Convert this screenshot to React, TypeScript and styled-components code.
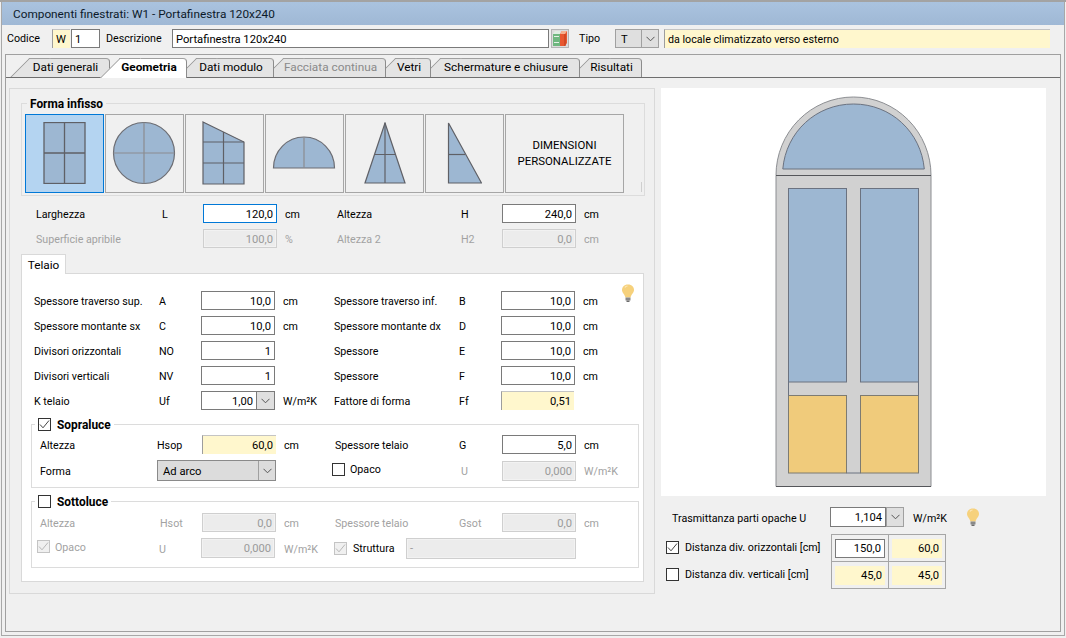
import React from "react";
import styled, { createGlobalStyle } from "styled-components";

const Global = createGlobalStyle`
  html, body { margin: 0; padding: 0; background: #f0f0f0; }
  body { font-family: Roboto, "Open Sans", sans-serif; font-size: 10.7px; color: #000; }
  * { box-sizing: border-box; }
`;

const Page = styled.div`
  width: 1066px; height: 638px; overflow: hidden; background: #f0f0f0;
  border-top: 2px solid #a3a3a3; padding-left: 1px;
`;
const Win = styled.div`
  width: 1064px; height: 634px;
  border-left: 1px solid #a8a8a8; border-right: 1px solid #a8a8a8; border-bottom: 1px solid #a8a8a8;
`;
const TitleBar = styled.div`
  height: 23px; padding-left: 11px; display: flex; align-items: center;
  background: linear-gradient(#aac3df, #9fb8d5); color: #0c1a2a; font-size: 11.8px;
`;
const Toolbar = styled.div`
  height: 29px; display: flex; align-items: center; padding: 0 0 2px 5px;
`;
const BarLabel = styled.span<{ $w: number; $pad?: number }>`
  width: ${p => p.$w}px; padding-left: ${p => p.$pad ?? 0}px; flex: none; white-space: nowrap;
`;
const Box = styled.div<{ $w: number; $h?: number; $kind?: "plain" | "focus" | "off" | "calc" | "bare" | "cell"; $left?: boolean; $ml?: number }>`
  width: ${p => p.$w}px; height: ${p => p.$h ?? 19}px; flex: none; margin-left: ${p => p.$ml ?? 0}px;
  display: flex; align-items: center; justify-content: ${p => (p.$left ? "flex-start" : "flex-end")};
  padding: 1px 3px 0; white-space: nowrap; font-size: 11.2px;
  ${p => {
    switch (p.$kind) {
      case "focus": return "background:#fff;border:1px solid #0078d7;";
      case "off": return "background:#ececec;border:1px solid #cfcfcf;color:#9a9a9a;box-shadow:inset 0 0 0 1px #f2f2f2;";
      case "calc": return "background:#fff7cd;border-top:1px solid #c4c4c4;border-left:1px solid #9d9d9d;";
      case "cell": return "background:#fff7cd;";
      case "bare": return "background:#fff;border-right:1px solid #7a7a7a;";
      default: return "background:#fff;border:1px solid #7a7a7a;";
    }
  }}
`;
const BookBtn = styled.div`
  width: 18px; height: 19px; margin-left: 2px; flex: none; background: #dcdcdc; border: 1px solid #b4b4b4;
  display: flex; align-items: center; justify-content: center;
`;
const ComboWrap = styled.div<{ $w: number; $h?: number; $off?: number; $tone?: "field" | "select" | "btn" }>`
  width: ${p => p.$w}px; height: ${p => p.$h ?? 19}px; flex: none; display: flex; align-items: center;
  padding-left: ${p => p.$off ?? 5}px;
  ${p => p.$tone === "field" && "background:#fff;border:1px solid #7a7a7a;"}
  ${p => p.$tone === "select" && "background:#dcdcdc;border:1px solid #8a8a8a;grid-column:span 2;"}
  ${p => p.$tone === "btn" && "background:#dfdfdf;border:1px solid #a0a0a0;justify-content:center;"}
  ${p => !p.$tone && "background:#dfdfdf;border:1px solid #a0a0a0;"}
`;
const ComboText = styled.span`
  flex: 1; white-space: nowrap; font-size: 11.2px; padding-top: 1px;
`;
const ComboArrow = styled.div<{ $w?: number; $fill?: boolean }>`
  width: ${p => p.$w ?? 17}px; align-self: stretch; flex: none;
  ${p => p.$fill ? "background:#dfdfdf;" : "border-left:1px solid #a0a0a0;"}
  display: flex; align-items: center; justify-content: center;
`;
const Note = styled.div`
  width: 386px; height: 19px; margin-left: 5px; padding-left: 3px; display: flex; align-items: center;
  background: #fff7cd; border-top: 1px solid #c4c4c4; border-left: 1px solid #9d9d9d; flex: none;
`;
const TabPanel = styled.div`
  width: 1056px; height: 578px; margin-left: 3px; border: 1px solid #a0a0a0; padding-top: 3px;
`;
const TabStrip = styled.div`
  height: 20px; display: flex; gap: 9px; padding-left: 23px; border-bottom: 1px solid #6e6e6e;
`;
const Tab = styled.div<{ $w: number; $on?: boolean; $off?: boolean; $z: number }>`
  position: relative; z-index: ${p => p.$z}; width: ${p => p.$w}px; height: ${p => (p.$on ? 20 : 19)}px;
  background: ${p => (p.$on ? "#fff" : "#e4e4e4")};
  border-top: 1px solid #a0a0a0; border-right: 1px solid #8c8c8c; border-top-right-radius: 4px;
  display: flex; align-items: center; justify-content: center; padding: 0 7px ${p => (p.$on ? 3 : 2)}px 0;
  font-size: 11.8px; white-space: nowrap;
  font-weight: ${p => (p.$on ? 700 : 400)};
  color: ${p => (p.$off ? "#8a8a8a" : "#000")};
  &::before {
    content: ""; position: absolute; left: -9px; top: -1px; bottom: 0; width: 20px;
    background: inherit; border-top: 1px solid #a0a0a0; border-left: 1px solid #8c8c8c;
    transform: skewX(-45deg); z-index: -1;
  }
`;
const TabBody = styled.div`
  display: flex; padding: 10px 0 0 3px;
`;
const LeftBox = styled.div`
  width: 646px; height: 506px; border: 1px solid #d9d9d9; padding: 6px 0 0 11px; flex: none;
`;
const Group = styled.fieldset<{ $w: number; $h: number; $pt?: number; $mt?: number }>`
  width: ${p => p.$w}px; height: ${p => p.$h}px; margin: ${p => p.$mt ?? 0}px 0 0 0;
  padding: ${p => p.$pt ?? 3}px 0 0 3px; border: 1px solid #dcdcdc; min-width: 0; position: relative;
`;
const GroupLegend = styled.legend<{ $ml?: number }>`
  display: flex; align-items: center; gap: 6px; height: 16px; padding: 1px 3px 0; margin-left: ${p => p.$ml ?? 2}px;
  font-weight: 700; font-size: 11.9px; color: #000;
`;
const ShapeRow = styled.div`
  display: flex; gap: 1px;
  &::after {
    content: ""; position: absolute; right: 2px; bottom: 3px; width: 1px; height: 10px; background: #cfcfcf;
  }
`;
const ShapeBtn = styled.div<{ $on?: boolean; $wide?: boolean }>`
  width: ${p => (p.$wide ? 119 : 79)}px; height: 79px; flex: none;
  border: 1px solid ${p => (p.$on ? "#0078d7" : "#a6a6a6")};
  background: ${p => (p.$on ? "#b4d4f1" : "#f0f0f0")};
  padding: ${p => (p.$wide ? "0" : "0 2px 2px 0")};
  display: flex; align-items: center; justify-content: center; text-align: center; line-height: 15.5px; font-size: 11.4px;
`;
const DimGrid = styled.div`
  display: grid; grid-template-columns: 126px 41px 74px 60px 124px 41px 74px 40px;
  grid-auto-rows: 19px; row-gap: 6px; align-items: center; margin: 8px 0 5px 15px;
`;
const Row = styled.div`
  display: grid; grid-template-columns: 125px 42px 74px 59px 125px 42px 74px 50px;
  grid-auto-rows: 19px; row-gap: 6px; align-items: center;
`;
const SubGrid = styled.div<{ $second: number }>`
  display: grid; grid-template-columns: 117px 45px 74px 59px 124px 43px 74px 60px;
  grid-template-rows: 19px ${p => p.$second}px; row-gap: 6px; align-items: center; padding-left: 5px;
`;
const Txt = styled.span<{ $off?: boolean; $pad?: number }>`
  white-space: nowrap; color: ${p => (p.$off ? "#a2a2a2" : "#000")};
  padding: 2px 0 0 ${p => p.$pad ?? 0}px;
`;
const Unit = styled(Txt)`
  padding-left: 8px;
`;
const FrameTab = styled.div`
  width: 45px; height: 20px; background: #fff; border: 1px solid #d9d9d9; border-bottom: none;
  display: flex; align-items: center; justify-content: center; font-size: 11.8px; position: relative; top: 1px; z-index: 1;
`;
const FramePanel = styled.div`
  position: relative; width: 623px; height: 309px; background: #fff; border: 1px solid #d9d9d9; padding: 17px 0 0 12px;
`;
const Bulb = styled.div`
  position: absolute; right: 8px; top: 10px; line-height: 0;
`;
const InnerGroups = styled.div`
  margin-left: -3px; padding-top: 6px;
`;
const Check = styled.span<{ $off?: boolean }>`
  width: 13px; height: 13px; flex: none; display: inline-flex; align-items: center; justify-content: center;
  background: ${p => (p.$off ? "#f0f0f0" : "#fff")};
  border: 1px solid ${p => (p.$off ? "#c4c4c4" : "#333")};
`;
const CheckLine = styled.label<{ $shift?: number; $gap?: number; $lift?: number }>`
  display: flex; align-items: center; gap: ${p => p.$gap ?? 5}px; margin-left: ${p => p.$shift ?? 0}px; white-space: nowrap;
  margin-top: ${p => -(p.$lift ?? 0)}px;
`;
const StructRow = styled.div`
  grid-column: 5 / span 3; display: flex; align-items: center; margin-left: -1px;
`;
const StructLabel = styled.span`
  width: 59px; padding-left: 6px; flex: none; white-space: nowrap;
`;
const RightCol = styled.div`
  width: 385px; margin-left: 6px; flex: none;
`;
const Picture = styled.div`
  height: 408px; background: #fff; line-height: 0;
`;
const URow = styled.div`
  display: flex; align-items: center; height: 20px; margin-top: 11px; padding-left: 11px;
`;
const ULabel = styled.span`
  width: 158px; flex: none; white-space: nowrap; padding-top: 2px;
`;
const UUnit = styled.span`
  width: 53px; margin-left: 9px; flex: none; white-space: nowrap; padding-top: 2px;
`;
const DistRow = styled.div`
  display: flex; margin-top: 7px; height: 55px;
`;
const DistChecks = styled.div`
  width: 170px; flex: none; padding: 7px 0 0 5px; display: flex; flex-direction: column; gap: 14px;
`;
const DistGrid = styled.div`
  width: 115px; height: 55px; display: grid; grid-template-columns: 1fr 1fr; grid-template-rows: 1fr 1fr;
  gap: 1px; padding: 1px; background: #a6a6a6;
`;
const DistCell = styled.div`
  background: #f0f0f0; display: flex; align-items: center; justify-content: center;
`;

const Chevron = () => (
  <svg width="9" height="6" viewBox="0 0 9 6"><path d="M0.5 0.8 L4.5 4.8 L8.5 0.8" fill="none" stroke="#555" strokeWidth="1" /></svg>
);
const Tick = ({ off }: { off?: boolean }) => (
  <svg width="11" height="11" viewBox="0 0 11 11"><path d="M1 5.5 L4 8.8 L10 1.5" fill="none" stroke={off ? "#b8b8b8" : "#444"} strokeWidth="1" /></svg>
);
const BulbIcon = () => (
  <svg width="14" height="19" viewBox="0 0 14 19">
    <path d="M7 0.5 C3 0.5 1 3 1 6 C1 8.8 3.6 10 4.4 13.5 L9.6 13.5 C10.4 10 13 8.8 13 6 C13 3 11 0.5 7 0.5Z" fill="#f6d17c" />
    <path d="M4 3.5 C4.5 2.5 5.5 2 6.5 2" stroke="#fbe8bd" strokeWidth="1.2" fill="none" />
    <rect x="4.5" y="13.5" width="5" height="3" fill="#8a8a8a" />
    <rect x="5.5" y="16.5" width="3" height="1.5" fill="#6c6c6c" />
  </svg>
);
const BookIcon = () => (
  <svg width="16" height="17" viewBox="0 0 16 17">
    <path d="M1 4 L3 1 L8 1 L8 4Z" fill="#dfeee2" />
    <rect x="1" y="4" width="7" height="12" fill="#6fb77f" />
    <rect x="2" y="6" width="5" height="1" fill="#e4f1e6" />
    <rect x="2" y="12" width="5" height="1" fill="#e4f1e6" />
    <path d="M8 4 L8 16 L13 16 L15 13 L15 1 L10 1Z" fill="#e8572f" />
    <path d="M8 4 L13 4 L15 1 L10 1Z" fill="#f6b08f" />
    <rect x="12.5" y="4" width="1" height="12" fill="#b93c1c" />
  </svg>
);

const G = "#9db7d2";
const ST = "#5f6066";
const Win1 = () => (
  <svg width="52" height="62" viewBox="0 0 52 62">
    <rect x="6" y="0.5" width="41" height="61" fill={G} stroke={ST} strokeWidth="1.3" />
    <path d="M26.5 0.5V61.5M6 31H47" stroke={ST} strokeWidth="1.3" />
  </svg>
);
const Win2 = () => (
  <svg width="64" height="64" viewBox="0 0 64 64">
    <circle cx="32" cy="32" r="30.5" fill={G} stroke="#6c6d73" strokeWidth="1.2" />
    <path d="M32 1.5V62.5M1.5 32H62.5" stroke="#8b8c90" strokeWidth="1.2" />
  </svg>
);
const Win3 = () => (
  <svg width="44" height="64" viewBox="0 0 44 64">
    <path d="M1 1 L42 21 V63 H1Z" fill={G} stroke={ST} strokeWidth="1.2" />
    <path d="M1 21H42M1 42H42M21.5 11V63" stroke={ST} strokeWidth="1.2" />
  </svg>
);
const Win4 = () => (
  <svg width="64" height="34" viewBox="0 0 64 34">
    <path d="M1.5 32 A30.5 31 0 0 1 62.5 32Z" fill={G} stroke="#6c6d73" strokeWidth="1.2" />
    <path d="M32 1V32" stroke="#8b8c90" strokeWidth="1.2" />
  </svg>
);
const Win5 = () => (
  <svg width="44" height="62" viewBox="-1 0 44 62">
    <path d="M22 1 L42 61 H2Z" fill={G} stroke={ST} strokeWidth="1.2" />
    <path d="M22 1V61M11 32.5H33" stroke={ST} strokeWidth="1.2" />
  </svg>
);
const Win6 = () => (
  <svg width="36" height="62" viewBox="-1 0 36 62">
    <path d="M1.5 1 L34.5 61 H1.5Z" fill={G} stroke={ST} strokeWidth="1.2" />
    <path d="M1.5 32.5H18" stroke={ST} strokeWidth="1.2" />
  </svg>
);

const FullWindow = () => (
  <svg width="385" height="408" viewBox="661 88 385 408">
    <path d="M776 486.5 V175.5 A77.5 78.5 0 0 1 931 175.5 V486.5Z" fill="#d1d1d1" stroke="#8c8e92" strokeWidth="1" />
    <path d="M776 486.5H931" stroke="#55565a" strokeWidth="1.2" />
    <path d="M776 175.5H931" stroke="#55565a" strokeWidth="1" />
    <path d="M782.8 169 C786 132 816 104 853.5 104 C891 104 921 132 924.3 169Z" fill={G} stroke="#6b7280" strokeWidth="1" />
    <rect x="788.5" y="188.5" width="58" height="193.5" fill={G} stroke="#6b7280" strokeWidth="1" />
    <rect x="860.5" y="188.5" width="58" height="193.5" fill={G} stroke="#6b7280" strokeWidth="1" />
    <rect x="788.5" y="395.5" width="58" height="77.5" fill="#f0cb7b" stroke="#7d7b72" strokeWidth="1" />
    <rect x="860.5" y="395.5" width="58" height="77.5" fill="#f0cb7b" stroke="#7d7b72" strokeWidth="1" />
    <path d="M788.5 382V395.5M918.5 382V395.5M846.5 473H860.5" stroke="#6b7280" strokeWidth="1" />
  </svg>
);

const tabs: [string, number][] = [
  ["Dati generali", 81], ["Geometria", 68], ["Dati modulo", 78], ["Facciata continua", 103],
  ["Vetri", 36], ["Schermature e chiusure", 140], ["Risultati", 53],
];

export default function App() {
  return (
    <Page>
      <Global />
      <Win>
        <TitleBar>Componenti finestrati: W1 - Portafinestra 120x240</TitleBar>
        <Toolbar>
          <BarLabel $w={45}>Codice</BarLabel>
          <Box $w={18} $kind="calc" $left>W</Box>
          <Box $w={29} $ml={1} $left>1</Box>
          <BarLabel $w={72} $pad={6}>Descrizione</BarLabel>
          <Box $w={377} $left>Portafinestra 120x240</Box>
          <BookBtn><BookIcon /></BookBtn>
          <BarLabel $w={46} $pad={10}>Tipo</BarLabel>
          <ComboWrap $w={44}><ComboText>T</ComboText><ComboArrow><Chevron /></ComboArrow></ComboWrap>
          <Note>da locale climatizzato verso esterno</Note>
        </Toolbar>
        <TabPanel>
          <TabStrip>
            {tabs.map(([t, w], i) => (
              <Tab key={t} $w={w} $on={i === 1} $off={i === 3} $z={i === 1 ? 20 : 10 - i}>{t}</Tab>
            ))}
          </TabStrip>
          <TabBody>
            <LeftBox>
              <Group $w={624} $h={101}>
                <GroupLegend>Forma infisso</GroupLegend>
                <ShapeRow>
                  <ShapeBtn $on><Win1 /></ShapeBtn>
                  <ShapeBtn><Win2 /></ShapeBtn>
                  <ShapeBtn><Win3 /></ShapeBtn>
                  <ShapeBtn><Win4 /></ShapeBtn>
                  <ShapeBtn><Win5 /></ShapeBtn>
                  <ShapeBtn><Win6 /></ShapeBtn>
                  <ShapeBtn $wide>DIMENSIONI<br />PERSONALIZZATE</ShapeBtn>
                </ShapeRow>
              </Group>
              <DimGrid>
                <Txt>Larghezza</Txt><Txt>L</Txt><Box $w={74} $kind="focus">120,0</Box><Unit>cm</Unit>
                <Txt>Altezza</Txt><Txt>H</Txt><Box $w={74}>240,0</Box><Unit>cm</Unit>
                <Txt $off>Superficie apribile</Txt><Txt $off>&nbsp;</Txt><Box $w={74} $kind="off">100,0</Box><Unit $off>%</Unit>
                <Txt $off>Altezza 2</Txt><Txt $off>H2</Txt><Box $w={74} $kind="off">0,0</Box><Unit $off>cm</Unit>
              </DimGrid>
              <FrameTab>Telaio</FrameTab>
              <FramePanel>
                <Bulb><BulbIcon /></Bulb>
                <Row>
                  <Txt>Spessore traverso sup.</Txt><Txt>A</Txt><Box $w={74}>10,0</Box><Unit>cm</Unit>
                  <Txt>Spessore traverso inf.</Txt><Txt>B</Txt><Box $w={74}>10,0</Box><Unit>cm</Unit>
                  <Txt>Spessore montante sx</Txt><Txt>C</Txt><Box $w={74}>10,0</Box><Unit>cm</Unit>
                  <Txt>Spessore montante dx</Txt><Txt>D</Txt><Box $w={74}>10,0</Box><Unit>cm</Unit>
                  <Txt>Divisori orizzontali</Txt><Txt>NO</Txt><Box $w={74}>1</Box><span />
                  <Txt>Spessore</Txt><Txt>E</Txt><Box $w={74}>10,0</Box><Unit>cm</Unit>
                  <Txt>Divisori verticali</Txt><Txt>NV</Txt><Box $w={74}>1</Box><span />
                  <Txt>Spessore</Txt><Txt>F</Txt><Box $w={74}>10,0</Box><Unit>cm</Unit>
                  <Txt>K telaio</Txt><Txt>Uf</Txt>
                  <ComboWrap $w={74} $off={0} $tone="field">
                    <Box $w={55} $h={17} $kind="bare">1,00</Box>
                    <ComboArrow $fill><Chevron /></ComboArrow>
                  </ComboWrap>
                  <Unit>W/m²K</Unit>
                  <Txt>Fattore di forma</Txt><Txt>Ff</Txt><Box $w={73} $kind="calc">0,51</Box><span />
                </Row>
                <InnerGroups>
                  <Group $w={608} $h={72} $pt={3}>
                    <GroupLegend $ml={0}><Check><Tick /></Check>Sopraluce</GroupLegend>
                    <SubGrid $second={21}>
                      <Txt>Altezza</Txt><Txt>Hsop</Txt><Box $w={74} $kind="calc">60,0</Box><Unit>cm</Unit>
                      <Txt>Spessore telaio</Txt><Txt>G</Txt><Box $w={74}>5,0</Box><Unit>cm</Unit>
                      <Txt>Forma</Txt>
                      <ComboWrap $w={119} $h={21} $tone="select">
                        <ComboText>Ad arco</ComboText><ComboArrow><Chevron /></ComboArrow>
                      </ComboWrap>
                      <span />
                      <CheckLine $shift={-3} $lift={2}><Check />Opaco</CheckLine>
                      <Txt $off $pad={2}>U</Txt><Box $w={74} $h={20} $kind="off">0,000</Box><Unit $off>W/m²K</Unit>
                    </SubGrid>
                  </Group>
                  <Group $w={608} $h={75} $mt={5} $pt={4}>
                    <GroupLegend $ml={0}><Check />Sottoluce</GroupLegend>
                    <SubGrid $second={20}>
                      <Txt $off>Altezza</Txt><Txt $off $pad={3}>Hsot</Txt><Box $w={74} $kind="off">0,0</Box><Unit $off>cm</Unit>
                      <Txt $off>Spessore telaio</Txt><Txt $off>Gsot</Txt><Box $w={74} $kind="off">0,0</Box><Unit $off>cm</Unit>
                      <CheckLine $shift={-3} $lift={3}><Check $off><Tick off /></Check><Txt $off>Opaco</Txt></CheckLine>
                      <Txt $off $pad={2}>U</Txt><Box $w={74} $h={20} $ml={-1} $kind="off">0,000</Box><Unit $off>W/m²K</Unit>
                      <StructRow>
                        <Check $off><Tick off /></Check>
                        <StructLabel>Struttura</StructLabel>
                        <Box $w={170} $h={21} $kind="off" $left>-</Box>
                      </StructRow>
                    </SubGrid>
                  </Group>
                </InnerGroups>
              </FramePanel>
            </LeftBox>
            <RightCol>
              <Picture><FullWindow /></Picture>
              <URow>
                <ULabel>Trasmittanza parti opache U</ULabel>
                <Box $w={56} $h={20}>1,104</Box>
                <ComboWrap $w={18} $h={20} $off={0} $tone="btn"><Chevron /></ComboWrap>
                <UUnit>W/m²K</UUnit>
                <BulbIcon />
              </URow>
              <DistRow>
                <DistChecks>
                  <CheckLine $gap={6}><Check><Tick /></Check>Distanza div. orizzontali [cm]</CheckLine>
                  <CheckLine $gap={6}><Check />Distanza div. verticali [cm]</CheckLine>
                </DistChecks>
                <DistGrid>
                  <DistCell><Box $w={50}>150,0</Box></DistCell>
                  <DistCell><Box $w={50} $kind="cell">60,0</Box></DistCell>
                  <DistCell><Box $w={50} $kind="cell">45,0</Box></DistCell>
                  <DistCell><Box $w={50} $kind="cell">45,0</Box></DistCell>
                </DistGrid>
              </DistRow>
            </RightCol>
          </TabBody>
        </TabPanel>
      </Win>
    </Page>
  );
}
